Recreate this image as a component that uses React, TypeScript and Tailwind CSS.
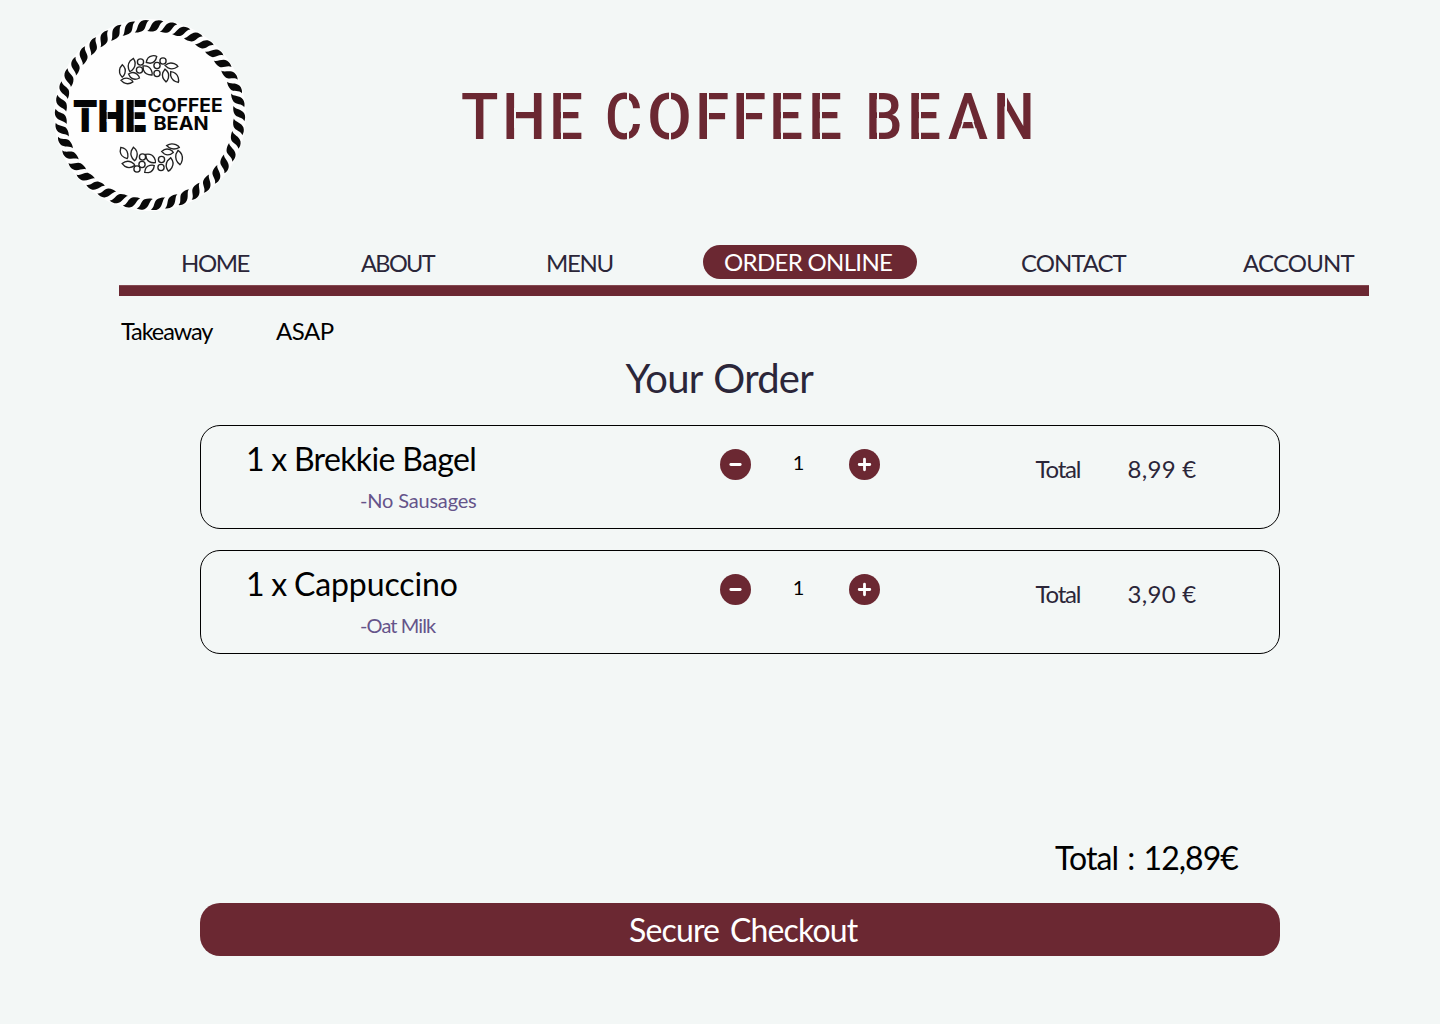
import React from "react";

type Cut = "none" | "stem" | "round" | "mid";

// One stencil letter: cell width, horizontal fit, and where the bridge is cut.
const title: { ch: string; cell: string; fit: string; cut: Cut; at?: string }[] = [
  { ch: "T", cell: "w-[44px]", fit: "scale-x-[0.96] -ml-px", cut: "none" },
  { ch: "H", cell: "w-[47px]", fit: "scale-x-[0.97] -ml-[4px]", cut: "mid" },
  { ch: "E ", cell: "w-[55px]", fit: "scale-x-[0.94] -ml-[4px]", cut: "stem" },
  { ch: "C", cell: "w-[42px]", fit: "scale-x-[0.89] -ml-[3px]", cut: "round", at: "left-[18.6px]" },
  { ch: "O", cell: "w-[49.3px]", fit: "scale-x-[1.02] -ml-[3px]", cut: "round", at: "left-[18.7px]" },
  { ch: "F", cell: "w-[36.7px]", fit: "scale-x-[0.97] -ml-[4px]", cut: "stem" },
  { ch: "F", cell: "w-[37px]", fit: "scale-x-[0.97] -ml-[4px]", cut: "stem" },
  { ch: "E", cell: "w-[39.5px]", fit: "scale-x-[0.94] -ml-[4px]", cut: "stem" },
  { ch: "E ", cell: "w-[56.5px]", fit: "scale-x-[0.94] -ml-[4px]", cut: "stem" },
  { ch: "B", cell: "w-[42px]", fit: "scale-x-[0.93] -ml-[4px]", cut: "stem" },
  { ch: "E", cell: "w-[37.5px]", fit: "scale-x-[0.94] -ml-[4px]", cut: "stem" },
  { ch: "A", cell: "w-[48.8px]", fit: "scale-x-[0.94]", cut: "none" },
  { ch: "N", cell: "w-[37px]", fit: "scale-x-[0.92] -ml-[4px]", cut: "stem" },
];

function StencilTitle() {
  return (
    <h1 className="flex h-[64px] font-[Roboto,sans-serif] text-[64px] leading-[64px] font-medium text-[#6b2832]">
      {title.map((l, i) => (
        <span key={i} className={`relative block whitespace-pre ${l.cell}`}>
          <span className={`inline-block origin-left ${l.fit}`}>{l.ch}</span>
          {l.cut === "stem" && <span className="absolute top-[6px] left-[8px] h-[52px] w-[2px] bg-[#f3f7f6]" />}
          {l.cut === "mid" && <span className="absolute top-[22px] left-[8px] h-[20px] w-[2px] bg-[#f3f7f6]" />}
          {l.cut === "round" && <span className={`absolute top-[6px] h-[52px] w-[2px] bg-[#f3f7f6] ${l.at}`} />}
          {l.ch === "A" && (
            <svg className="absolute top-0 left-0" width="40" height="64" viewBox="0 0 40 64">
              <path d="M12 45.5 L15 36 M27.8 45.5 L24.8 36" stroke="#f3f7f6" strokeWidth="1.6" />
            </svg>
          )}
        </span>
      ))}
    </h1>
  );
}

const leaves: [number, number, number, number, number][] = [
  // cx, cy, rx, ry, rotation
  [122.3, 71, 2.8, 6.2, 0],
  [131.6, 65, 3.2, 6.8, 15],
  [134, 76, 5.8, 3, 20],
  [127, 81, 6, 2.6, 8],
  [151.5, 59.5, 6, 3.2, -30],
  [147.5, 70.5, 3.2, 6.4, -45],
  [171.5, 66, 6.4, 2.8, 5],
  [165.5, 75.5, 3, 6.4, -5],
  [174.5, 77, 3, 6.6, -35],
];
const berries: [number, number][] = [
  [140.5, 62],
  [139.5, 70],
  [157, 65.5],
  [163, 61],
  [157, 73.5],
];
const lowerLeaves: [number, number, number, number, number][] = [
  [124, 153, 3.2, 6.4, -30],
  [134, 154, 3, 6.8, -5],
  [128.5, 164.5, 6.4, 3, 8],
  [150.5, 158.5, 3.2, 6.4, -50],
  [149.5, 169, 5.8, 3, -35],
  [167.5, 152, 5.8, 2.8, 5],
  [173, 146.5, 6.4, 2.4, 8],
  [179, 157.5, 3.2, 7.2, -8],
  [169.5, 164.5, 3.2, 6.8, 10],
];
const lowerBerries: [number, number][] = [
  [142.5, 157],
  [142, 164.5],
  [137, 169],
  [161.5, 159.5],
  [161, 167.5],
];

function Logo() {
  const count = 42;
  return (
    <svg width="200" height="200" viewBox="50 15 200 200" className="block shrink-0">
      <circle cx="150" cy="115" r="96" fill="#fefefe" />
      <g fill="#0a0a0a">
        {Array.from({ length: count }, (_, i) => (
          <path
            key={i}
            transform={`translate(150 115) rotate(${-5.3 + (i * 360) / count})`}
            d="M-7.6 -83.6 C-4.2 -85 -4.6 -92 0.2 -94.3 C2.6 -95.4 5.4 -95.4 8 -94.2 C3.8 -92.8 4.4 -86.4 0.6 -84.5 C-2 -83.3 -5 -83 -7.6 -83.6 Z"
          />
        ))}
      </g>
      <g fill="none" stroke="#222" strokeWidth="1.35">
        {[...leaves, ...lowerLeaves].map(([x, y, rx, ry, r], i) => (
          <path
            key={i}
            transform={`translate(${x} ${y}) rotate(${r})`}
            d={
              rx > ry
                ? `M${-rx} 0 Q${-rx * 0.4} ${-ry * 1.5} ${rx * 0.4} ${-ry * 0.9} Q${rx * 0.9} ${-ry * 0.5} ${rx} 0 Q${rx * 0.3} ${ry * 1.5} ${-rx * 0.5} ${ry * 0.8} Z`
                : `M0 ${-ry} Q${rx * 1.5} ${-ry * 0.4} ${rx * 0.9} ${ry * 0.4} Q${rx * 0.5} ${ry * 0.9} 0 ${ry} Q${-rx * 1.5} ${ry * 0.3} ${-rx * 0.8} ${-ry * 0.5} Z`
            }
          />
        ))}
        {[...berries, ...lowerBerries].map(([x, y], i) => (
          <circle key={i} cx={x} cy={y} r="3.1" />
        ))}
      </g>
      <g fill="#050505" fontFamily="Inter, sans-serif">
        <text x="72.8" y="131.8" fontSize="43.5" fontWeight="900" textLength="74.4" lengthAdjust="spacingAndGlyphs">
          THE
        </text>
        <text x="147.6" y="112" fontSize="19" fontWeight="700" textLength="75" lengthAdjust="spacingAndGlyphs">
          COFFEE
        </text>
        <text x="153.5" y="129.5" fontSize="19" fontWeight="700" textLength="55" lengthAdjust="spacingAndGlyphs">
          BEAN
        </text>
      </g>
      <g stroke="#fefefe" strokeWidth="0.9">
        <path d="M80 107.6 H91 M107.2 110 V122 M134.2 99 V133" />
      </g>
    </svg>
  );
}

const nav = [
  { label: "HOME", cls: "w-[180px] tracking-[-1.4px]" },
  { label: "ABOUT", cls: "w-[185px] text-[23.5px] tracking-[-1.6px]" },
  { label: "MENU", cls: "w-[156.5px] tracking-[-1.3px]" },
  { label: "ORDER ONLINE", cls: "", active: true },
  { label: "CONTACT", cls: "ml-[105px] w-[222px] tracking-[-1px]" },
  { label: "ACCOUNT", cls: "tracking-[-0.8px]" },
];

function RoundButton({ plus = false }: { plus?: boolean }) {
  return (
    <button className="flex size-[31px] items-center justify-center rounded-full bg-[#6b2832]">
      <svg width="31" height="31" viewBox="0 0 31 31" stroke="#fff" strokeWidth="2.8" strokeLinecap="round">
        <path d={plus ? "M10.2 15.5 H20.8 M15.5 10.2 V20.8" : "M10.8 15.5 H20.2"} />
      </svg>
    </button>
  );
}

const items = [
  { name: "Brekkie Bagel", nameCls: "tracking-[-0.65px]", note: "-No Sausages", noteCls: "tracking-[-0.18px]", price: "8,99 €" },
  { name: "Cappuccino", nameCls: "tracking-[-0.1px]", note: "-Oat Milk", noteCls: "tracking-[-0.9px]", price: "3,90 €" },
];

export default function App() {
  return (
    <div className="h-[1024px] w-[1440px] overflow-hidden bg-[#f3f7f6] font-[Lato,sans-serif] text-black">
      <header className="flex h-[230px] pt-[15px] pl-[50px]">
        <Logo />
        <div className="pt-[71px] pl-[212px]">
          <StencilTitle />
        </div>
      </header>

      <nav className="flex h-[55px] pt-[15px] pl-[181px] text-[24px] leading-[36px] text-[#2b2639]">
        {nav.map((n) =>
          n.active ? (
            <a key={n.label} className="-mr-px ml-[0.5px] flex h-[34px] w-[214px] justify-start rounded-full bg-[#6b2832] pl-[21px] leading-[34px] tracking-[-0.67px] whitespace-nowrap text-white">
              {n.label}
            </a>
          ) : (
            <a key={n.label} className={n.cls}>{n.label}</a>
          )
        )}
      </nav>
      <div className="ml-[119px] h-[11px] w-[1250px] border-t border-[#834850] bg-[#6b2832]" />

      <div className="flex h-[52px] pt-[17px] pl-[121px] text-[24px] leading-[36px]">
        <span className="w-[155px] text-[23.5px] tracking-[-1.1px]">Takeaway</span>
        <span className="tracking-[-0.5px]">ASAP</span>
      </div>
      <h2 className="h-[77px] pl-[625.5px] text-[40px] leading-[60px] tracking-[-0.75px] text-[#2b2639] [word-spacing:2px]">Your Order</h2>

      <main className="ml-[200px] w-[1080px]">
        <div className="flex flex-col gap-[21px]">
          {items.map((it) => (
            <section key={it.name} className="flex h-[104px] rounded-[20px] border border-black">
              <div className="w-[519px] pl-[45px]">
                <p className="pt-[9px] text-[32px] leading-[48px]">
                  <span className="[word-spacing:-1.5px]">1 x </span>
                  <span className={it.nameCls}>{it.name}</span>
                </p>
                <p className={`pt-[2px] pl-[114px] text-[20px] leading-[30px] text-[#65548a] ${it.noteCls}`}>{it.note}</p>
              </div>
              <div className="mt-[23px] flex h-[31px] w-[160px] items-center justify-between">
                <RoundButton />
                <span className="-mt-[5px] -ml-[3px] text-[20px] leading-[30px]">1</span>
                <RoundButton plus />
              </div>
              <div className="flex pt-[25px] pl-[155.5px] text-[24px] leading-[36px] text-[#2b2639]">
                <span className="w-[92px] tracking-[-1.25px]">Total</span>
                <span className="tracking-[0.3px]">{it.price}</span>
              </div>
            </section>
          ))}
        </div>
        <p className="mt-[180px] pl-[855px] text-[32px] leading-[48px] tracking-[-0.95px] [word-spacing:2px]">Total : 12,89€</p>
        <button className="mt-[21px] flex h-[53px] w-full rounded-[20px] bg-[#6b2832] pl-[429px] text-[32px] leading-[53px] tracking-[-0.85px] whitespace-nowrap text-white [word-spacing:3.5px]">
          Secure Checkout
        </button>
      </main>
    </div>
  );
}
